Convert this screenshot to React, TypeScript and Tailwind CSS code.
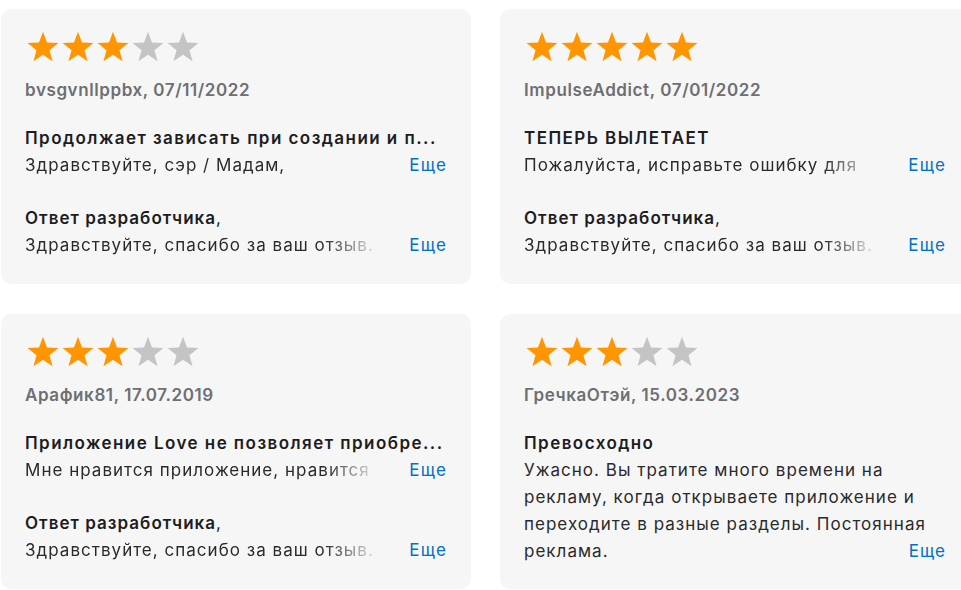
import React from 'react';

type Review = {
  rating: number;
  author: string;
  title: string;
  body: string[];
  clamp: boolean;
  reply?: string;
};

const reviews: Review[] = [
  {
    rating: 3,
    author: 'bvsgvnllppbx, 07/11/2022',
    title: 'Продолжает зависать при создании и п...',
    body: ['Здравствуйте, сэр / Мадам,'],
    clamp: true,
    reply: 'Здравствуйте, спасибо за ваш отзыв.',
  },
  {
    rating: 5,
    author: 'ImpulseAddict, 07/01/2022',
    title: 'ТЕПЕРЬ ВЫЛЕТАЕТ',
    body: ['Пожалуйста, исправьте ошибку для'],
    clamp: true,
    reply: 'Здравствуйте, спасибо за ваш отзыв.',
  },
  {
    rating: 3,
    author: 'Арафик81, 17.07.2019',
    title: 'Приложение Love не позволяет приобре...',
    body: ['Мне нравится приложение, нравится'],
    clamp: true,
    reply: 'Здравствуйте, спасибо за ваш отзыв.',
  },
  {
    rating: 3,
    author: 'ГречкаОтэй, 15.03.2023',
    title: 'Превосходно',
    body: [
      'Ужасно. Вы тратите много времени на',
      'рекламу, когда открываете приложение и',
      'переходите в разные разделы. Постоянная',
      'реклама.',
    ],
    clamp: false,
  },
];

function Star({ filled }: { filled: boolean }) {
  return (
    <svg viewBox="0 0 24 24" className="w-[36px] h-[35px] -mr-[1px]">
      <polygon
        points="12,1.2 14.75,8.6 22.6,8.9 16.45,13.8 18.55,21.4 12,17.05 5.45,21.4 7.55,13.8 1.4,8.9 9.25,8.6"
        fill={filled ? '#ff9500' : '#c4c4c6'}
      />
    </svg>
  );
}

// one clamped line that fades out before the "more" link
function MoreRow({ text }: { text: string }) {
  return (
    <div className="flex items-center">
      <span className="w-[356px] overflow-hidden whitespace-nowrap tracking-[0.06em] [mask-image:linear-gradient(to_right,black_84%,transparent)]">
        {text}
      </span>
      <span className="ml-auto text-[#0070c9] tracking-[0.07em]">Еще</span>
    </div>
  );
}

function ReviewCard({ review }: { review: Review }) {
  return (
    <div className="bg-[#f6f6f6] rounded-[10px] h-[275px] px-6 pt-[21px] flex flex-col">
      <div className="flex">
        {[0, 1, 2, 3, 4].map((i) => (
          <Star key={i} filled={i < review.rating} />
        ))}
      </div>

      <div className="mt-[12px] text-[#6e6e73] font-semibold tracking-[0.035em]">{review.author}</div>

      <div className="mt-[21px] font-semibold text-[#1d1d1f] whitespace-nowrap tracking-[0.085em]">
        {review.title}
      </div>

      {review.clamp ? (
        <MoreRow text={review.body[0]} />
      ) : (
        <div className="tracking-[0.06em]">
          {review.body.map((line, i) => (
            <div key={i} className="flex whitespace-nowrap">
              <span>{line}</span>
              {i === review.body.length - 1 && <span className="ml-auto text-[#0070c9]">Еще</span>}
            </div>
          ))}
        </div>
      )}

      {review.reply && (
        <>
          <div className="mt-[26px] text-[#1d1d1f] tracking-[0.06em]">
            <span className="font-semibold">Ответ разработчика</span>,
          </div>
          <MoreRow text={review.reply} />
        </>
      )}
    </div>
  );
}

export default function App() {
  return (
    <div className="w-[961px] h-[590px] overflow-hidden bg-white pt-[9px] pl-[1px] font-['Inter',_'Noto_Sans',_sans-serif] text-[17px] leading-[27px] text-[#2a2a2c]">
      <div className="grid grid-cols-[470px_470px] gap-x-[29px] gap-y-[30px]">
        {reviews.map((r) => (
          <ReviewCard key={r.author} review={r} />
        ))}
      </div>
    </div>
  );
}
